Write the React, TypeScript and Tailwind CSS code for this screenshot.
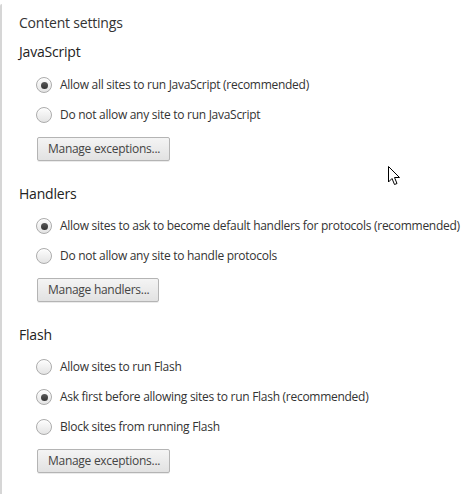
import React from "react";

function Radio({ checked }: { checked?: boolean }) {
  return (
    <span className="relative flex h-[16px] w-[16px] shrink-0 items-center justify-center rounded-full border border-[#acacac] bg-gradient-to-b from-[#fdfdfd] to-[#e4e4e4] shadow-[inset_0_1px_1px_rgba(255,255,255,0.8)]">
      {checked && <span className="h-[7px] w-[7px] rounded-full bg-gradient-to-b from-[#5a5a5a] to-[#333]" />}
    </span>
  );
}

function Row({ label, checked }: { label: string; checked?: boolean }) {
  return (
    <div className="flex h-[30px] items-center pl-[17px]">
      <Radio checked={checked} />
      <span className="ml-[8px] whitespace-nowrap text-[12px] tracking-[-0.28px] text-[#333]">{label}</span>
    </div>
  );
}

function Button({ label }: { label: string }) {
  return (
    <div className="ml-[18px] mt-[7px] flex">
      <div className="flex h-[24px] items-center rounded-[2px] border border-[#b4b4b4] bg-gradient-to-b from-[#f4f4f4] to-[#e2e2e2] pl-[10px] pr-[9px] text-[12px] tracking-[-0.28px] text-[#444] shadow-[0_1px_0_rgba(0,0,0,0.08)]">
        {label}
      </div>
    </div>
  );
}

function Heading({ text, className }: { text: string; className?: string }) {
  return <div className={"flex h-[20px] items-center text-[14px] tracking-[-0.2px] text-[#222] " + (className ?? "")}>{text}</div>;
}

export default function App() {
  return (
    <div className="relative h-[494px] w-[475px] overflow-hidden bg-white" style={{ fontFamily: '"Open Sans", "Noto Sans", sans-serif' }}>
      <div className="absolute left-0 top-[4px] h-[500px] w-[2px] rounded-tl-[3px] bg-[#d6d6d6]" />
      <div className="flex flex-col pl-[19px] pt-[12px]">
        <div className="flex h-[20px] items-center text-[14px] tracking-[-0.2px] text-[#333]">Content settings</div>
        <Heading text="JavaScript" className="mt-[9px]" />
        <div className="mt-[9px] flex flex-col">
          <Row label="Allow all sites to run JavaScript (recommended)" checked />
          <Row label="Do not allow any site to run JavaScript" />
        </div>
        <Button label="Manage exceptions..." />
        <Heading text="Handlers" className="mt-[22px]" />
        <div className="mt-[8px] flex flex-col">
          <Row label="Allow sites to ask to become default handlers for protocols (recommended)" checked />
          <Row label="Do not allow any site to handle protocols" />
        </div>
        <Button label="Manage handlers..." />
        <Heading text="Flash" className="mt-[22px]" />
        <div className="mt-[8px] flex flex-col">
          <Row label="Allow sites to run Flash" />
          <Row label="Ask first before allowing sites to run Flash (recommended)" checked />
          <Row label="Block sites from running Flash" />
        </div>
        <Button label="Manage exceptions..." />
      </div>
      <svg className="absolute left-[388px] top-[166px]" width="13" height="20" viewBox="0 0 13 20">
        <path d="M0.5 0.5 L0.5 16 L4 12.5 L6.5 18.5 L9 17.5 L6.5 11.5 L11.5 11.5 Z" fill="white" stroke="black" strokeWidth="1" strokeLinejoin="miter" />
      </svg>
    </div>
  );
}
